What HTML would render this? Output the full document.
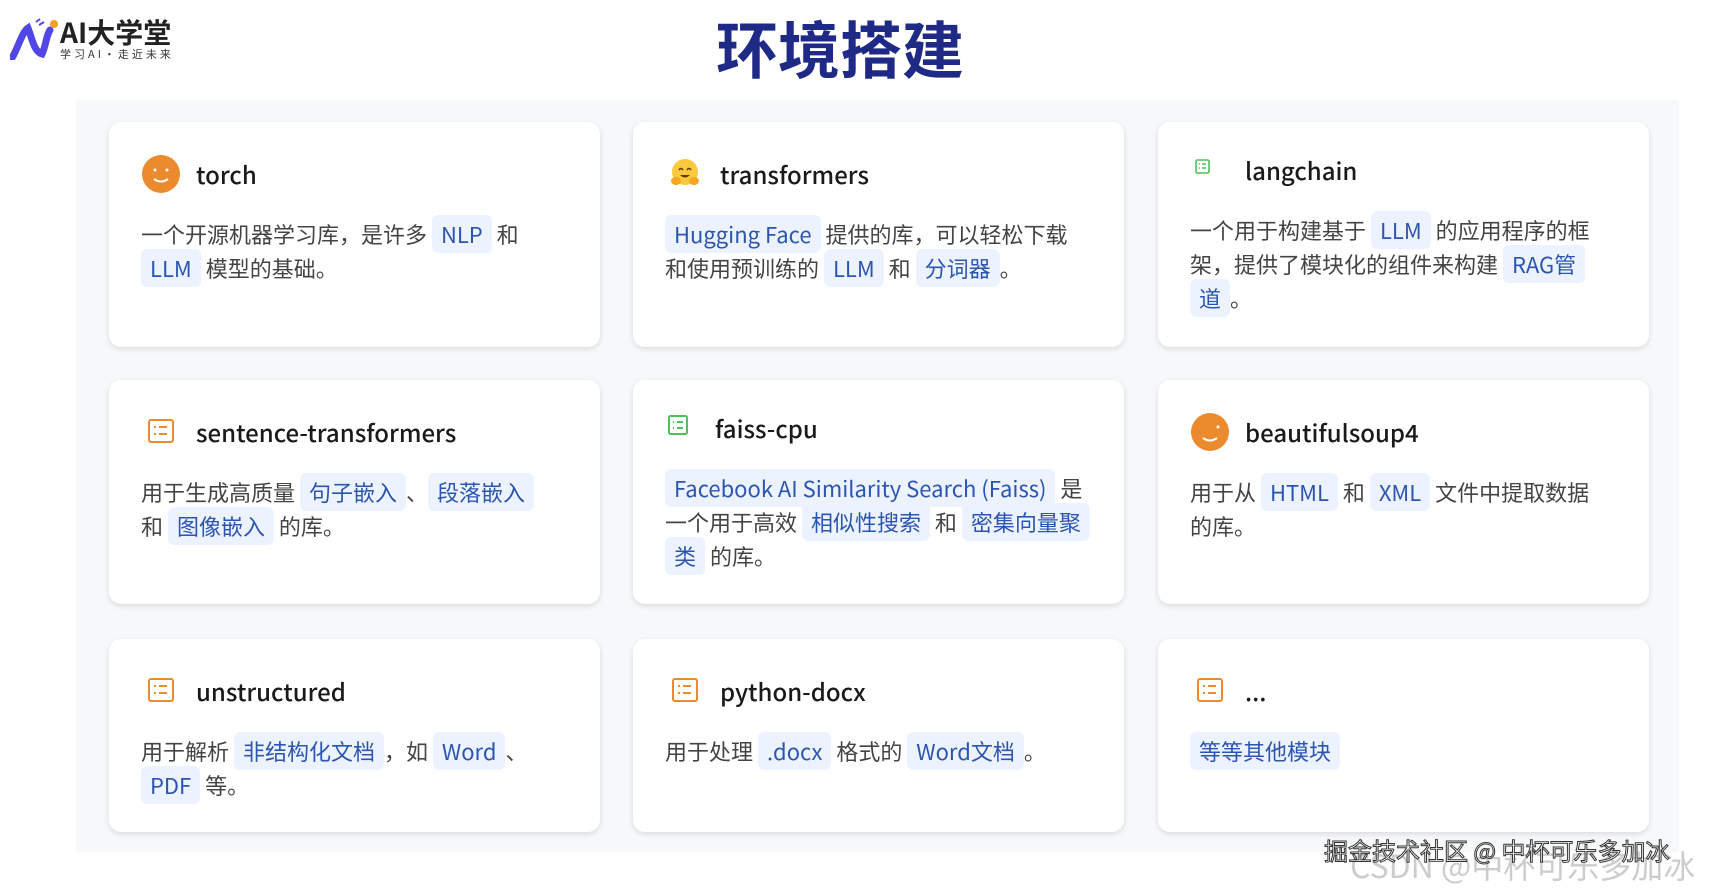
<!DOCTYPE html>
<html><head><meta charset="utf-8"><style>
*{margin:0;padding:0;box-sizing:border-box}
body{width:1709px;height:890px;background:#fff;position:relative;overflow:hidden;font-family:"Liberation Sans","Noto Sans CJK SC",sans-serif}
.panel{position:absolute;left:76px;top:100px;width:1603px;height:752px;background:#f7f8fa}
.card{position:absolute;width:491px;background:#fff;border-radius:12px;box-shadow:0 2px 6px rgba(0,0,0,.12)}
.ic{position:absolute;left:32px;top:32px;width:40px;height:40px}
.t{position:absolute;left:87px;top:34px;font-size:24px;color:#1a1a1a;font-family:"Noto Sans CJK SC",sans-serif;font-weight:500}
.b{position:absolute;left:32px;top:95px;width:450px;font-size:22px;line-height:34px;color:#444;font-family:"Noto Sans CJK SC",sans-serif;white-space:nowrap}
.g{background:#edf3fe;color:#2c55b0;padding:3px 9px;border-radius:6px}
.title{position:absolute;left:716px;top:1px;font-size:62px;font-weight:bold;color:#1f2a86;font-family:"Noto Sans CJK SC",sans-serif}
.wm{position:absolute;left:1324px;top:832px;font-size:24px;font-family:"Noto Sans CJK SC",sans-serif;color:#fff;-webkit-text-stroke:1px #333}
.wm2{position:absolute;left:1350px;top:842px;font-size:32px;color:#ccc;font-family:"Noto Sans CJK SC",sans-serif}
</style></head><body>
<svg style="position:absolute;left:10px;top:18px" width="50" height="42" viewBox="0 0 50 42"><path d="M2 40 C8 30 12 14 18 10 C22 20 24 34 32 36 C36 28 36 18 40 12" stroke="#5146e6" stroke-width="7" fill="none" stroke-linecap="round"/><circle cx="44" cy="6" r="4" fill="#f0a020"/><path d="M26 4 l4 -3 M29 7 l5 -3" stroke="#5146e6" stroke-width="2"/></svg>
<div style="position:absolute;left:60px;top:16px;font-size:28px;font-weight:bold;color:#222;font-family:'Noto Sans CJK SC',sans-serif;line-height:32px">AI大学堂</div>
<div style="position:absolute;left:60px;top:46px;font-size:11px;color:#333;letter-spacing:3px;font-family:'Noto Sans CJK SC',sans-serif">学习AI·走近未来</div>
<div class="title">环境搭建</div>
<div class="panel"></div>

<div class="card" style="left:109px;top:122px;height:225px">
<svg class="ic" viewBox="0 0 40 40"><circle cx="20" cy="20" r="19" fill="#ec8a2e"/><circle cx="14" cy="16" r="1.5" fill="#fff"/><circle cx="26" cy="16" r="1.5" fill="#fff"/><path d="M13 25 Q20 30 27 25" stroke="#fff" stroke-width="2" fill="none"/></svg>
<div class="t">torch</div>
<div class="b">一个开源机器学习库，是许多 <span class="g">NLP</span> 和<br><span class="g">LLM</span> 模型的基础。</div></div>

<div class="card" style="left:633px;top:122px;height:225px">
<svg class="ic" viewBox="0 0 40 40"><circle cx="20" cy="18" r="13" fill="#fbc93a"/><path d="M14 16 q2 -3 4 0 M22 16 q2 -3 4 0" stroke="#5a3b16" stroke-width="1.6" fill="none"/><path d="M15 21 q5 5 10 0" fill="#5a3b16"/><ellipse cx="11" cy="27" rx="5" ry="4" fill="#f5a623"/><ellipse cx="29" cy="27" rx="5" ry="4" fill="#f5a623"/></svg>
<div class="t">transformers</div>
<div class="b"><span class="g">Hugging Face</span> 提供的库，可以轻松下载<br>和使用预训练的 <span class="g">LLM</span> 和 <span class="g">分词器</span>。</div></div>

<div class="card" style="left:1158px;top:122px;height:225px">
<svg class="ic" viewBox="0 0 40 40"><rect x="6" y="6" width="13" height="13" rx="1.5" stroke="#4cc25a" stroke-width="1.6" fill="none"/><path d="M9 10h1M12 10h4M9 14h1M12 14h4" stroke="#4cc25a" stroke-width="1.4"/></svg>
<div class="t" style="top:30px">langchain</div>
<div class="b" style="top:91px">一个用于构建基于 <span class="g">LLM</span> 的应用程序的框<br>架，提供了模块化的组件来构建 <span class="g">RAG管</span><br><span class="g">道</span>。</div></div>

<div class="card" style="left:109px;top:380px;height:224px">
<svg class="ic" viewBox="0 0 40 40"><rect x="8" y="8" width="24" height="22" rx="2" stroke="#ec8a2e" stroke-width="2" fill="none"/><path d="M13 15h2M18 15h8M13 22h2M18 22h8" stroke="#ec8a2e" stroke-width="2"/></svg>
<div class="t">sentence-transformers</div>
<div class="b">用于生成高质量 <span class="g">句子嵌入</span>、<span class="g">段落嵌入</span><br>和 <span class="g">图像嵌入</span> 的库。</div></div>

<div class="card" style="left:633px;top:380px;height:224px">
<svg class="ic" viewBox="0 0 40 40"><rect x="4" y="4" width="18" height="18" rx="1.5" stroke="#4cc25a" stroke-width="2" fill="none"/><path d="M8 10h1M12 10h6M8 16h1M12 16h6" stroke="#4cc25a" stroke-width="2"/></svg>
<div class="t" style="top:30px;left:82px">faiss-cpu</div>
<div class="b" style="top:91px"><span class="g">Facebook AI Similarity Search (Faiss)</span> 是<br>一个用于高效 <span class="g">相似性搜索</span> 和 <span class="g">密集向量聚</span><br><span class="g">类</span> 的库。</div></div>

<div class="card" style="left:1158px;top:380px;height:224px">
<svg class="ic" viewBox="0 0 40 40"><circle cx="20" cy="20" r="19" fill="#ec8a2e"/><circle cx="28" cy="15" r="1.5" fill="#fff"/><path d="M13 26 Q20 31 27 26" stroke="#fff" stroke-width="2" fill="none"/></svg>
<div class="t">beautifulsoup4</div>
<div class="b">用于从 <span class="g">HTML</span> 和 <span class="g">XML</span> 文件中提取数据<br>的库。</div></div>

<div class="card" style="left:109px;top:639px;height:193px">
<svg class="ic" viewBox="0 0 40 40"><rect x="8" y="8" width="24" height="22" rx="2" stroke="#ec8a2e" stroke-width="2" fill="none"/><path d="M13 15h2M18 15h8M13 22h2M18 22h8" stroke="#ec8a2e" stroke-width="2"/></svg>
<div class="t">unstructured</div>
<div class="b">用于解析 <span class="g">非结构化文档</span>，如 <span class="g">Word</span>、<br><span class="g">PDF</span> 等。</div></div>

<div class="card" style="left:633px;top:639px;height:193px">
<svg class="ic" viewBox="0 0 40 40"><rect x="8" y="8" width="24" height="22" rx="2" stroke="#ec8a2e" stroke-width="2" fill="none"/><path d="M13 15h2M18 15h8M13 22h2M18 22h8" stroke="#ec8a2e" stroke-width="2"/></svg>
<div class="t">python-docx</div>
<div class="b">用于处理 <span class="g">.docx</span> 格式的 <span class="g">Word文档</span>。</div></div>

<div class="card" style="left:1158px;top:639px;height:193px">
<svg class="ic" viewBox="0 0 40 40"><rect x="8" y="8" width="24" height="22" rx="2" stroke="#ec8a2e" stroke-width="2" fill="none"/><path d="M13 15h2M18 15h8M13 22h2M18 22h8" stroke="#ec8a2e" stroke-width="2"/></svg>
<div class="t">...</div>
<div class="b"><span class="g">等等其他模块</span></div></div>

<div class="wm2">CSDN @中杯可乐多加冰</div>
<div class="wm">掘金技术社区 @ 中杯可乐多加冰</div>
</body></html>
